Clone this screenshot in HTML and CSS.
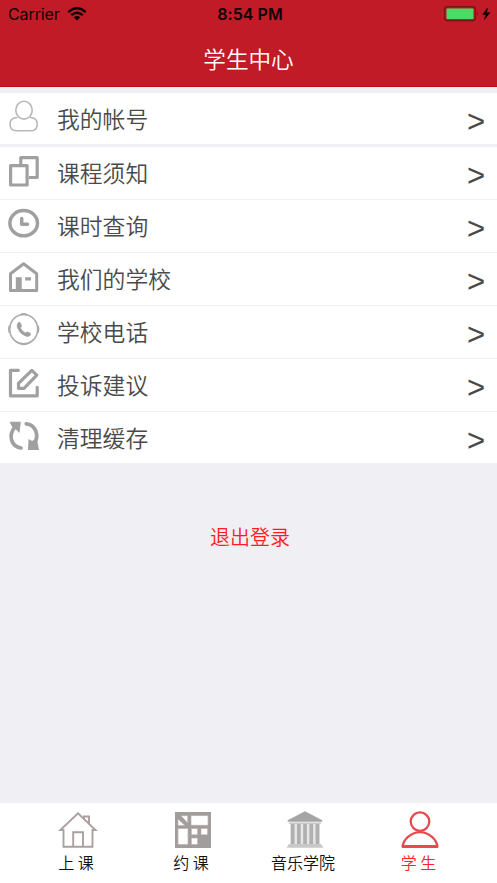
FILE: index.html
```html
<!DOCTYPE html>
<html lang="zh-CN">
<head>
<meta charset="utf-8">
<title>学生中心</title>
<link rel="stylesheet" href="styles.css">
</head>
<body>
<header class="header">
  <div class="status">
    <div class="carrier"><span>Carrier</span>
      <svg width="20" height="14" viewBox="0 0 20 14" fill="none" stroke="#100305" stroke-width="2.4"><path d="M1.3 5.1Q10-2.6 18.7 5.1M4.3 8.2Q10 3.2 15.7 8.2"/><path d="M6.6 10.2Q10 7.6 13.4 10.2L10 13.6Z" fill="#100305" stroke="none"/></svg>
    </div>
    <div class="time">8:54 PM</div>
    <div class="battery">
      <svg width="48" height="16" viewBox="0 0 48 16"><rect x=".7" y=".7" width="30.6" height="14.1" rx="2.5" fill="none" stroke="#7b141c" stroke-width="1.4"/><rect x="2.5" y="2.5" width="27" height="10.6" rx="1" fill="#4cd964"/><path d="M33 5.5q2 2.2 0 4.6z" fill="#7b141c"/><path d="M43.5 2L38.7 8.5H42L40.3 13.6L46 6.7H42.6Z" fill="#100305" stroke="#100305" stroke-width=".5"/></svg>
    </div>
  </div>
  <h1 class="title">学生中心</h1>
</header>

<main class="content">
  <section class="group">
    <a class="row"><svg class="icon" viewBox="0 0 32 32" fill="none" stroke="#b8b8b8" stroke-width="1.6"><ellipse cx="16" cy="9.2" rx="8.2" ry="8.9"/><path d="M9.5 16.5C4.5 16.6 2 19 2 23Q2 29.8 8.5 29.8H23Q29.2 29.8 29.2 23C29.2 19 27 16.6 22 16.5"/></svg><span class="label">我的帐号</span><span class="arrow">&gt;</span></a>
  </section>
  <section class="group">
    <a class="row"><svg class="icon" viewBox="0 0 32 32" fill="none" stroke="#a0a0a0" stroke-width="3.2" stroke-linejoin="round"><path d="M12.8 10V2.6H29.2V22.5H21"/><rect x="2.6" y="10.6" width="16.5" height="19.4"/></svg><span class="label">课程须知</span><span class="arrow">&gt;</span></a>
    <a class="row"><svg class="icon" viewBox="0 0 32 32" fill="none" stroke="#a0a0a0" stroke-width="3.5"><ellipse cx="15.7" cy="15.2" rx="13.8" ry="12.6"/><path d="M13.7 10.5V16.2H19.5" stroke-linecap="round" stroke-linejoin="round"/></svg><span class="label">课时查询</span><span class="arrow">&gt;</span></a>
    <a class="row"><svg class="icon" viewBox="0 0 32 32" fill="none" stroke="#a0a0a0" stroke-width="3" stroke-linejoin="round"><path d="M2.5 12.8L15.6 2.8L28.7 12.8V29.4H2.5Z"/><path d="M7.8 16.2H13.7V29H7.8ZM17.2 16.2H23V19.4H17.2Z" fill="#a0a0a0" stroke="none"/></svg><span class="label">我们的学校</span><span class="arrow">&gt;</span></a>
    <a class="row"><svg class="icon" viewBox="0 0 32 32" fill="none" stroke="#aaa" stroke-width="1.6"><ellipse cx="15.7" cy="15.2" rx="14" ry="14.7"/><path d="M12.5 1Q15.7-.8 19 1M12.5 29.4Q15.7 31.2 19 29.4M1.5 11.7Q.3 15.2 1.5 18.7M29.9 11.7Q31.1 15.2 29.9 18.7" stroke-width="2"/><path d="M10.5 8.4Q12.1 7.9 12.9 9.7L13.5 12Q13.4 13.1 12.4 13.7Q13.8 17.1 17.5 19Q18.3 17.5 19.8 18.1L22.3 19.3Q23.2 20.6 21.8 21.7Q19.8 23.1 17.4 22Q10.7 19.2 9.1 12.2Q8.9 9.5 10.5 8.4Z" fill="#a0a0a0" stroke="#a0a0a0" stroke-width=".6"/></svg><span class="label">学校电话</span><span class="arrow">&gt;</span></a>
    <a class="row"><svg class="icon" viewBox="0 0 32 32" fill="none" stroke="#a0a0a0" stroke-width="3.2" stroke-linecap="round" stroke-linejoin="round"><path d="M10.3 3.3H2.5V28.8H29.2V20.3"/><path d="M10.5 16.3L23.8 3.4L28.8 8.2L16 21.4H10.5Z"/></svg><span class="label">投诉建议</span><span class="arrow">&gt;</span></a>
    <a class="row"><svg class="icon" viewBox="0 0 32 32" fill="none" stroke="#a0a0a0" stroke-width="3.7"><path d="M13 28C2.5 26 .2 15 7 7M18.2 3.8C28 4.8 31.4 15.8 26.3 23" stroke-linecap="round"/><path d="M1.5 1.8H12.8L11.5 13L7.8 9.2L4 6.5ZM28.7 18.3L31 30H20L20.5 19L24.2 21Z" fill="#a0a0a0" stroke="none"/></svg><span class="label">清理缓存</span><span class="arrow">&gt;</span></a>
  </section>
  <button class="logout">退出登录</button>
</main>

<nav class="tabs">
  <a class="tab home"><svg width="40" height="40" viewBox="0 0 40 40" fill="none" stroke="#aaa0a0" stroke-width="1.9"><path d="M2.4 20L20 3.2L37.5 20H34.5V36.8H5.5V20ZM15.2 36.5V22.3H25V36.5M26 8.7V6.5H31V13.7"/></svg><span>上 课</span></a>
  <a class="tab book"><svg width="40" height="40" viewBox="0 0 40 40"><rect x="2" y="2" width="36" height="36" fill="#a09d9d"/><g fill="#fff" stroke="#c5aeae" stroke-width=".7"><path d="M5 9L12 15.5H5ZM8 5.7H14.7V13Z"/><rect x="18" y="5.7" width="17" height="9.5"/><rect x="5" y="18.5" width="10" height="16"/><rect x="18.3" y="18.5" width="6.3" height="6.3"/><rect x="28" y="18.5" width="6.5" height="6.3"/><rect x="18.3" y="28" width="6.3" height="6.5"/></g></svg><span>约 课</span></a>
  <a class="tab academy"><svg width="40" height="40" viewBox="0 0 40 40"><path d="M20 1.2L37.3 10.3V11.7H2.7V10.3Z" fill="#a5a5a5"/><path d="M4 12.5H36V14H4ZM4 34H36L38.4 37.8H1.6Z" fill="#c8c8c8"/><path d="M5.7 14H34.4V34H5.7Z" fill="#e6e6e6"/><path d="M5.7 14H9.5V34H5.7ZM12 14H15.7V34H12ZM18.2 14H21.9V34H18.2ZM24.4 14H28.1V34H24.4ZM30.6 14H34.4V34H30.6Z" fill="#b0b0b0"/></svg><span>音乐学院</span></a>
  <a class="tab student active"><svg width="40" height="40" viewBox="0 0 40 40" fill="none" stroke="#e74b4e" stroke-width="2.3"><ellipse cx="20" cy="11.6" rx="9.3" ry="9.2"/><path d="M2.6 36.5Q3.3 31 8 26.8Q20 17.5 32 26.8Q36.7 31 37.4 36.5Z" stroke-linejoin="round"/><path d="M2 36.4H38" stroke-width="3"/></svg><span>学 生</span></a>
</nav>
</body>
</html>
```
FILE: styles.css
```css
* { box-sizing: border-box; }
body {
  margin: 0;
  height: 883px;
  display: flex;
  flex-direction: column;
  overflow: hidden;
  background: #efeff4;
  color: #4a4a4a;
  font-family: "Noto Sans CJK SC", sans-serif;
  font-weight: 350;
}
svg { display: block; flex: none; }
.header { height: 87px; background: #c11b27; border-bottom: 1px solid #b90d16; }
.status {
  height: 28px;
  padding: 0 5px 0 8px;
  display: grid;
  grid-template-columns: 1fr auto 1fr;
  align-items: center;
  font-family: Inter, sans-serif;
  font-size: 16px;
  font-weight: 400;
  color: #100305;
}
.carrier { display: flex; align-items: center; gap: 7px; letter-spacing: -.1px; }
.time { font-weight: 600; letter-spacing: .05px; }
.battery { display: flex; justify-content: flex-end; }
.title {
  margin: 0;
  height: 60px;
  line-height: 61px;
  text-align: center;
  font-size: 22.6px;
  font-weight: 350;
  color: #fff;
}
.content { flex: 1; display: flex; flex-direction: column; padding-top: 6px; }
.group { background: #fff; margin-bottom: 3px; }
.row {
  height: 53px;
  padding: 0 12px 0 8px;
  display: flex;
  align-items: flex-start;
  border-bottom: 1px solid #efeff4;
}
.row:last-child { height: 51px; border-bottom: 0; }
.icon { width: 32px; height: 32px; margin: 8px 17px 0 0; overflow: visible; }
.label { flex: 1; font-size: 22.8px; line-height: 51px; }
.arrow { font-family: "Liberation Sans", sans-serif; font-size: 31px; line-height: 58px; }
.logout {
  align-self: center;
  margin: 53px 0 0 3px;
  padding: 0;
  border: 0;
  background: none;
  font: inherit;
  font-size: 20px;
  line-height: 36px;
  color: #ff1c20;
}
.tabs {
  height: 80px;
  padding: 7px 21px 0 20px;
  display: grid;
  grid-template-columns: repeat(4, 1fr);
  background: #fff;
  color: #111;
  font-size: 16px;
  line-height: 24px;
  font-weight: 350;
}
.tab { display: flex; flex-direction: column; align-items: center; }
.home { padding-left: 1px; }
.book { padding-left: 3px; }
.student { padding-left: 2px; }
.tab span { margin-right: 3px; }
.academy span { margin-right: 4px; }
.active { color: #ff2328; }
```
